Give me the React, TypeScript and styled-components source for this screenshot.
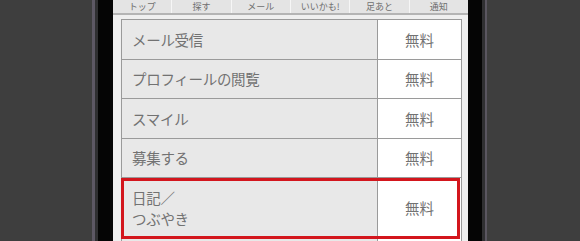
import React from "react";
import styled, { createGlobalStyle } from "styled-components";

const Global = createGlobalStyle`
  html, body { margin: 0; padding: 0; }
  body {
    width: 580px;
    height: 241px;
    overflow: hidden;
    background: #3e3e3e;
    font-family: "Noto Sans CJK JP", "Noto Sans", sans-serif;
  }
`;

const Page = styled.div`
  display: flex;
  height: 241px;
  background: #3e3e3e;
`;

const Side = styled.div<{ $w: number }>`
  width: ${(p) => p.$w}px;
  flex: none;
`;

const Edge = styled.div<{ $side: "left" | "right" }>`
  width: ${(p) => (p.$side === "left" ? 3 : 2)}px;
  flex: none;
  background: ${(p) => (p.$side === "left" ? "#5d5864" : "#5a5660")};
  border-${(p) => (p.$side === "left" ? "right" : "left")}: 3px solid #2f2f31;
`;

const Bezel = styled.div<{ $w: number }>`
  width: ${(p) => p.$w}px;
  flex: none;
  background: #050505;
`;

const Screen = styled.div`
  width: 355px;
  flex: none;
  background: #efefef;
  display: flex;
  flex-direction: column;
  overflow: hidden;
`;

const Nav = styled.nav`
  display: flex;
  height: 13px;
  background: #e4e4e4;
  border-bottom: 2px solid #b4b4b4;
`;

const Tab = styled.div<{ $first?: boolean }>`
  flex: 1;
  display: flex;
  align-items: center;
  justify-content: center;
  font-size: 9px;
  color: #6e6e6e;
  border-left: ${(p) => (p.$first ? "none" : "1px solid #f6f6f6")};
  line-height: 13px;
`;

const PinkRule = styled.div`
  height: 3px;
  margin-top: 3px;
  background: linear-gradient(#e88ab0, #c4306c 50%, #e88ab0);
`;

const Table = styled.div`
  margin: 1px 6px 0 8px;
  border-left: 1px solid #9a9a9a;
  border-right: 1px solid #9a9a9a;
  display: flex;
  flex-direction: column;
`;

const Row = styled.div<{ $tall?: boolean }>`
  position: relative;
  display: grid;
  grid-template-columns: 256px 1fr;
  height: ${(p) => (p.$tall ? "64px" : "39.5px")};
  box-sizing: border-box;
  border-top: 1px solid #9a9a9a;
`;

const Label = styled.div<{ $tall?: boolean }>`
  background: #e8e8e8;
  color: #727272;
  font-size: 14.5px;
  line-height: 21px;
  padding-left: 10px;
  display: flex;
  flex-direction: column;
  justify-content: ${(p) => (p.$tall ? "flex-start" : "center")};
  padding-top: ${(p) => (p.$tall ? "9px" : "0")};
  border-right: 1px solid #9a9a9a;
  box-sizing: border-box;
  letter-spacing: -0.3px;
`;

const Price = styled.div<{ $tall?: boolean }>`
  background: #ffffff;
  color: #727272;
  font-size: 14.5px;
  display: flex;
  align-items: ${(p) => (p.$tall ? "flex-start" : "center")};
  padding-top: ${(p) => (p.$tall ? "19px" : "0")};
  justify-content: center;
  line-height: 21px;
`;

const Highlight = styled.div`
  position: absolute;
  left: -1px;
  right: 1px;
  top: 0;
  height: 61px;
  box-sizing: border-box;
  border: 3px solid #d3161d;
  pointer-events: none;
`;

const tabs = ["トップ", "探す", "メール", "いいかも!", "足あと", "通知"];
const rows = ["メール受信", "プロフィールの閲覧", "スマイル", "募集する"];

export default function App() {
  return (
    <>
      <Global />
      <Page>
        <Side $w={92} />
        <Edge $side="left" />
        <Bezel $w={15} />
        <Screen>
          <Nav>
            {tabs.map((t, i) => (
              <Tab key={t} $first={i === 0}>
                {t}
              </Tab>
            ))}
          </Nav>
          <PinkRule />
          <Table>
            {rows.map((r) => (
              <Row key={r}>
                <Label>{r}</Label>
                <Price>無料</Price>
              </Row>
            ))}
            <Row $tall>
              <Label $tall>
                <span>日記／</span>
                <span>つぶやき</span>
              </Label>
              <Price $tall>無料</Price>
              <Highlight />
            </Row>
          </Table>
        </Screen>
        <Bezel $w={14} />
        <Edge $side="right" />
        <Side $w={94} />
      </Page>
    </>
  );
}
